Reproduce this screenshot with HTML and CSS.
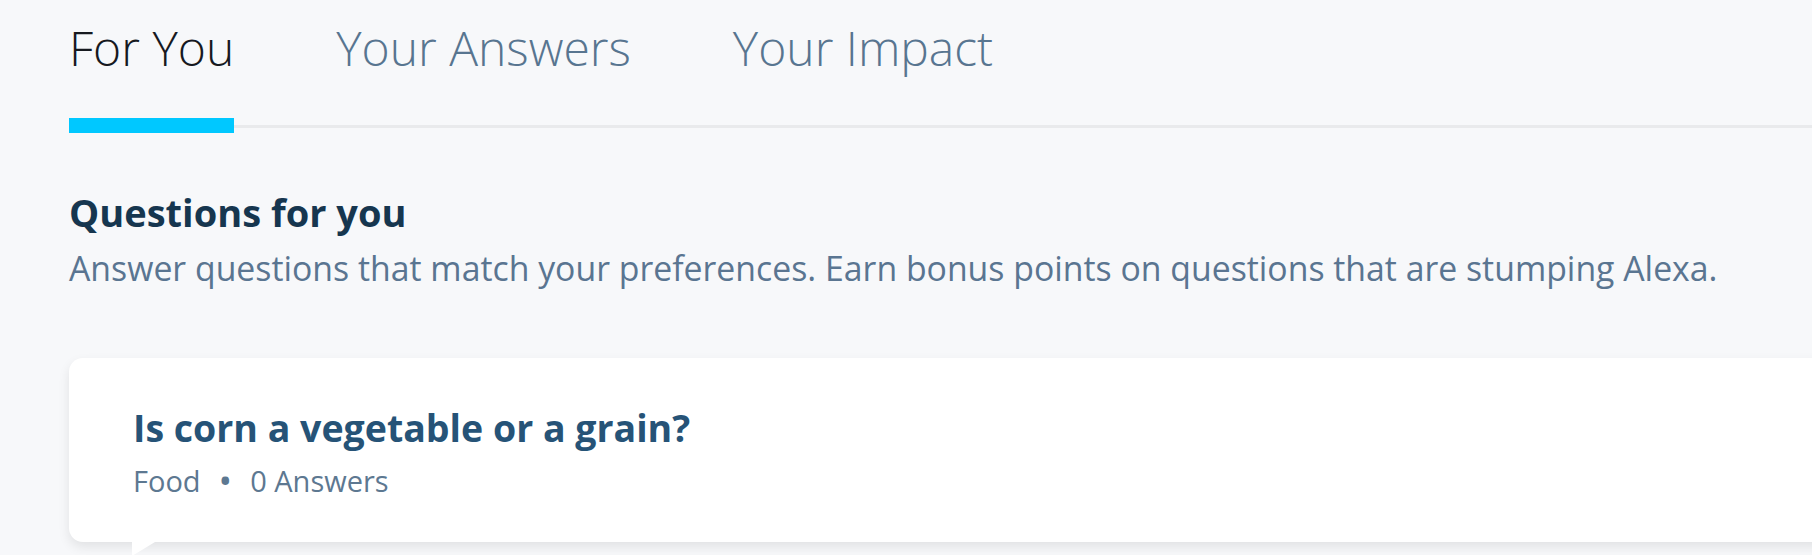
FILE: index.html
```html
<!DOCTYPE html>
<html lang="en">
<head>
<meta charset="utf-8">
<title>For You</title>
<link rel="stylesheet" href="styles.css">
</head>
<body>
<div class="page">
  <nav class="tabs">
    <a class="tab active">For You</a>
    <a class="tab">Your Answers</a>
    <a class="tab">Your Impact</a>
  </nav>
  <section class="intro">
    <h1 class="intro-title">Questions for you</h1>
    <p class="intro-text">Answer questions that match your preferences. Earn bonus points on questions that are stumping Alexa.</p>
  </section>
  <article class="card">
    <h2 class="card-title">Is corn a vegetable or a grain?</h2>
    <div class="card-meta"><span>Food</span><span class="dot">•</span><span>0 Answers</span></div>
  </article>
</div>
</body>
</html>
```

FILE: styles.css
```css
html, body {
  margin: 0;
  padding: 0;
  overflow: hidden;
}
body {
  background: #f7f8fa;
  font-family: "Open Sans", "Noto Sans", sans-serif;
  height: 555px;
}
.page {
  padding-left: 69px;
}
.tabs {
  display: flex;
  gap: 102px;
  padding-top: 24px;
  border-bottom: 3px solid #e9eaec;
}
.tab {
  position: relative;
  font-size: 48px;
  line-height: 48px;
  font-weight: 300;
  color: #587590;
  padding-bottom: 53px;
}
.tab.active {
  color: #16191f;
}
.tab.active::after {
  content: "";
  position: absolute;
  left: 0;
  right: 0;
  bottom: -8px;
  height: 15px;
  background: #00c8ff;
}
.intro {
  margin-top: 63px;
}
.intro-title {
  margin: 0;
  font-size: 38px;
  line-height: 43px;
  font-weight: 700;
  color: #16364f;
}
.intro-text {
  margin: 14px 0 0;
  font-size: 33.8px;
  line-height: 40px;
  color: #5a7591;
}
.card {
  position: relative;
  margin: 70px -60px 0 0;
  background: #fff;
  border-radius: 14px;
  box-shadow: 0 5px 12px rgba(0, 0, 0, 0.09);
  padding: 47px 64px 44px;
}
.card::after {
  content: "";
  position: absolute;
  left: 63px;
  top: 100%;
  width: 23px;
  height: 14px;
  background: #fff;
  clip-path: polygon(0 0, 100% 0, 0 100%);
}
.card-title {
  margin: 0;
  font-size: 37.5px;
  line-height: 46px;
  font-weight: 700;
  color: #265377;
}
.card-meta {
  margin-top: 13px;
  display: flex;
  align-items: center;
  gap: 18px;
  font-size: 29px;
  line-height: 34px;
  color: #5d7891;
}
.dot {
  font-size: 36px;
  line-height: 34px;
}
```
